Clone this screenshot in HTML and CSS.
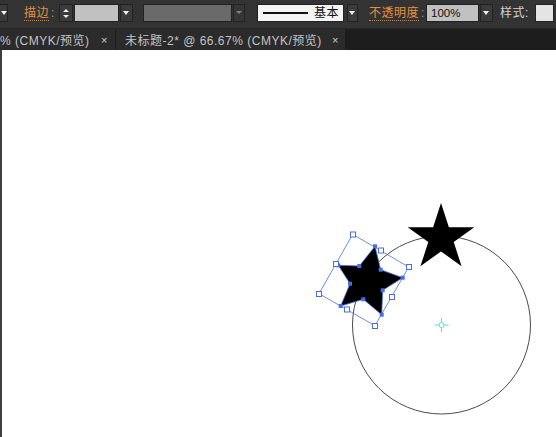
FILE: index.html
```html
<!DOCTYPE html>
<html lang="zh-CN">
<head>
  <meta charset="UTF-8">
  <title>未标题-2* @ 66.67% (CMYK/预览)</title>
  <link rel="stylesheet" href="styles.css">
</head>
<body>

  <!-- control bar -->
  <div class="control-bar">
    <span class="dd dd-edge"></span>
    <span class="lbl lbl-stroke"><u>描边</u><i>:</i></span>
    <span class="spin"><b class="up"></b><b class="down"></b></span>
    <span class="field field-stroke"></span>
    <span class="dd dd-stroke"></span>
    <span class="field field-var"></span>
    <span class="dd dd-off dd-var"></span>
    <span class="profile"><span class="profile-line"></span>基本</span>
    <span class="dd dd-profile"></span>
    <span class="lbl lbl-opacity"><u>不透明度</u><i>:</i></span>
    <span class="field field-opacity">100%</span>
    <span class="dd dd-opacity"></span>
    <span class="lbl lbl-style">样式:</span>
    <span class="swatch"></span>
  </div>

  <!-- document tabs -->
  <div class="tab-bar">
    <div class="tab tab-prev">% (CMYK/预览)<span class="tab-close">×</span></div>
    <div class="tab tab-cur">未标题-2* @ 66.67% (CMYK/预览)<span class="tab-close">×</span></div>
  </div>

  <!-- artboard, drawn in page coordinates -->
  <div class="artboard">
    <svg class="art" width="554" height="386" viewBox="2 51 554 386">
      <circle class="ellipse" cx="441.5" cy="326" r="89"/>

      <polygon class="star" points="441,204 448.9,228.2 474.3,228.2 453.7,243.1 461.6,267.3 441,252.4 420.4,267.3 428.3,243.1 407.7,228.2 433.1,228.2"/>

      <!-- selected star -->
      <polygon class="star sel-path" points="375,247.3 380.7,270.7 402.7,278.7 382.7,291.3 381.7,315.7 363.3,300.3 340.7,307 350,284.7 338.3,266.3 359.3,267"/>
      <polygon class="sel-box" points="352.7,235.3 408.7,268 375,326.7 319,294.7"/>

      <g class="anchors">
        <rect x="373" y="245.3" width="4" height="4"/>
        <rect x="378.7" y="268.7" width="4" height="4"/>
        <rect x="400.7" y="276.7" width="4" height="4"/>
        <rect x="380.7" y="289.3" width="4" height="4"/>
        <rect x="379.7" y="313.7" width="4" height="4"/>
        <rect x="361.3" y="298.3" width="4" height="4"/>
        <rect x="338.7" y="305" width="4" height="4"/>
        <rect x="348" y="282.7" width="4" height="4"/>
        <rect x="336.3" y="264.3" width="4" height="4"/>
        <rect x="357.3" y="265" width="4" height="4"/>
      </g>

      <g class="handles">
        <rect x="350.5" y="233" width="5" height="5"/>
        <rect x="378.5" y="249" width="5" height="5"/>
        <rect x="406.5" y="265.5" width="5" height="5"/>
        <rect x="389.5" y="295.5" width="5" height="5"/>
        <rect x="372.5" y="324.5" width="5" height="5"/>
        <rect x="344.5" y="308" width="5" height="5"/>
        <rect x="316.5" y="292.5" width="5" height="5"/>
        <rect x="333.5" y="262.5" width="5" height="5"/>
      </g>

      <g class="center-mark">
        <circle cx="441.5" cy="326" r="2.5"/>
        <line x1="441.5" y1="319" x2="441.5" y2="323.5"/>
        <line x1="441.5" y1="328.5" x2="441.5" y2="333"/>
        <line x1="434.5" y1="326" x2="439" y2="326"/>
        <line x1="444" y1="326" x2="448.5" y2="326"/>
      </g>
    </svg>
  </div>

</body>
</html>
```

FILE: styles.css
```css
body {
  margin: 0;
  height: 437px;
  overflow: hidden;
  display: flex;
  flex-direction: column;
  background: #1d1d1d;
  font-family: "Liberation Sans", "Noto Sans CJK SC", sans-serif;
  font-size: 12px;
  color: #cfcfcf;
}

/* top control bar */
.control-bar {
  height: 29px;
  box-sizing: border-box;
  padding-top: 4px;
  display: flex;
  align-items: flex-start;
  background: #333333;
  border-bottom: 1px solid #262626;
  white-space: nowrap;
}
.control-bar > span {
  flex: none;
  height: 18px;
  box-sizing: border-box;
}

.lbl {
  line-height: 18px;
  letter-spacing: 0.5px;
}
.lbl u {
  text-decoration: none;
  color: #e3913e;
  border-bottom: 1px dotted #c8803a;
}
.lbl i {
  font-style: normal;
  color: #9a9a9a;
  margin-left: 2px;
}
.lbl-stroke  { margin-left: 16px; width: 35px; }
.lbl-opacity { margin-left: 11px; width: 57px; }
.lbl-style   { margin-left: 7px; width: 35px; color: #d4d4d4; }

/* dropdown buttons */
.dd {
  position: relative;
  background: #3b3b3b;
  border: 1px solid #222;
}
.dd::after {
  content: "";
  position: absolute;
  left: 50%;
  top: 6px;
  margin-left: -3.5px;
  border-left: 3.5px solid transparent;
  border-right: 3.5px solid transparent;
  border-top: 4px solid #f2f2f2;
}
.dd-off::after {
  border-top-color: #808080;
  border-left-width: 3px;
  border-right-width: 3px;
  margin-left: -3px;
  border-top-width: 3px;
}
.dd-edge     { width: 8px; border-left: none; }
.dd-edge::after { left: 1px; margin-left: 0; }
.dd-stroke   { margin-left: 1px; width: 13px; }
.dd-var      { margin-left: 1px; width: 12px; background: #363636; }
.dd-profile  { margin-left: 3px; width: 11px; }
.dd-opacity  { margin-left: 1px; width: 13px; }

.spin {
  width: 14px;
  background: #3b3b3b;
  border: 1px solid #222;
  display: flex;
  flex-direction: column;
  align-items: center;
  justify-content: center;
  gap: 3px;
}
.spin b {
  width: 0;
  height: 0;
  border-left: 3px solid transparent;
  border-right: 3px solid transparent;
}
.spin .up   { border-bottom: 3px solid #eee; }
.spin .down { border-top: 3px solid #eee; }

.field {
  background: #c1c1c1;
  border: 1px solid #222;
  color: #111;
  line-height: 16px;
  padding-left: 4px;
}
.field-stroke  { margin-left: 1px; width: 45px; }
.field-var     { margin-left: 10px; width: 89px; background: #6a6a6a; }
.field-opacity { width: 53px; font-size: 11.5px; }

/* stroke profile preview */
.profile {
  margin-left: 12px;
  width: 87px;
  background: #f4f4f4;
  border: 1px solid #222;
  color: #111;
  line-height: 16px;
  display: flex;
  align-items: center;
  padding-left: 5px;
  letter-spacing: 0.5px;
}
.profile-line {
  width: 45px;
  height: 2px;
  background: #111;
  margin-right: 6px;
}

.swatch {
  width: 19px;
  background: #e4e4e4;
  border: 1px solid #222;
}

/* tabs */
.tab-bar {
  height: 21px;
  display: flex;
  gap: 1px;
  background: #1d1d1d;
}
.tab {
  height: 21px;
  box-sizing: border-box;
  display: flex;
  align-items: center;
  justify-content: space-between;
  background: #2b2b2b;
  color: #c4c4c4;
  white-space: nowrap;
  letter-spacing: 0.5px;
}
.tab-prev { width: 115px; padding-right: 7px; }
.tab-cur  { width: 229px; padding-left: 9px; padding-right: 6px; }
.tab-close {
  font-size: 11px;
  color: #d0d0d0;
}

/* artboard */
.artboard {
  flex: 1;
  background: #fff;
  border-left: 2px solid #3e3e3e;
}
.art {
  display: block;
}
.ellipse {
  fill: none;
  stroke: #4a4a4a;
  stroke-width: 1;
}
.star {
  fill: #000;
}
.sel-path {
  stroke: #4a6de0;
  stroke-width: 0.8;
}
.sel-box {
  fill: none;
  stroke: #4a6de0;
  stroke-width: 0.8;
}
.anchors rect {
  fill: #4a6de0;
}
.handles rect {
  fill: #fff;
  stroke: #4a6de0;
  stroke-width: 1;
}
.center-mark circle,
.center-mark line {
  fill: none;
  stroke: #4fe0ea;
  stroke-width: 1;
}
```
